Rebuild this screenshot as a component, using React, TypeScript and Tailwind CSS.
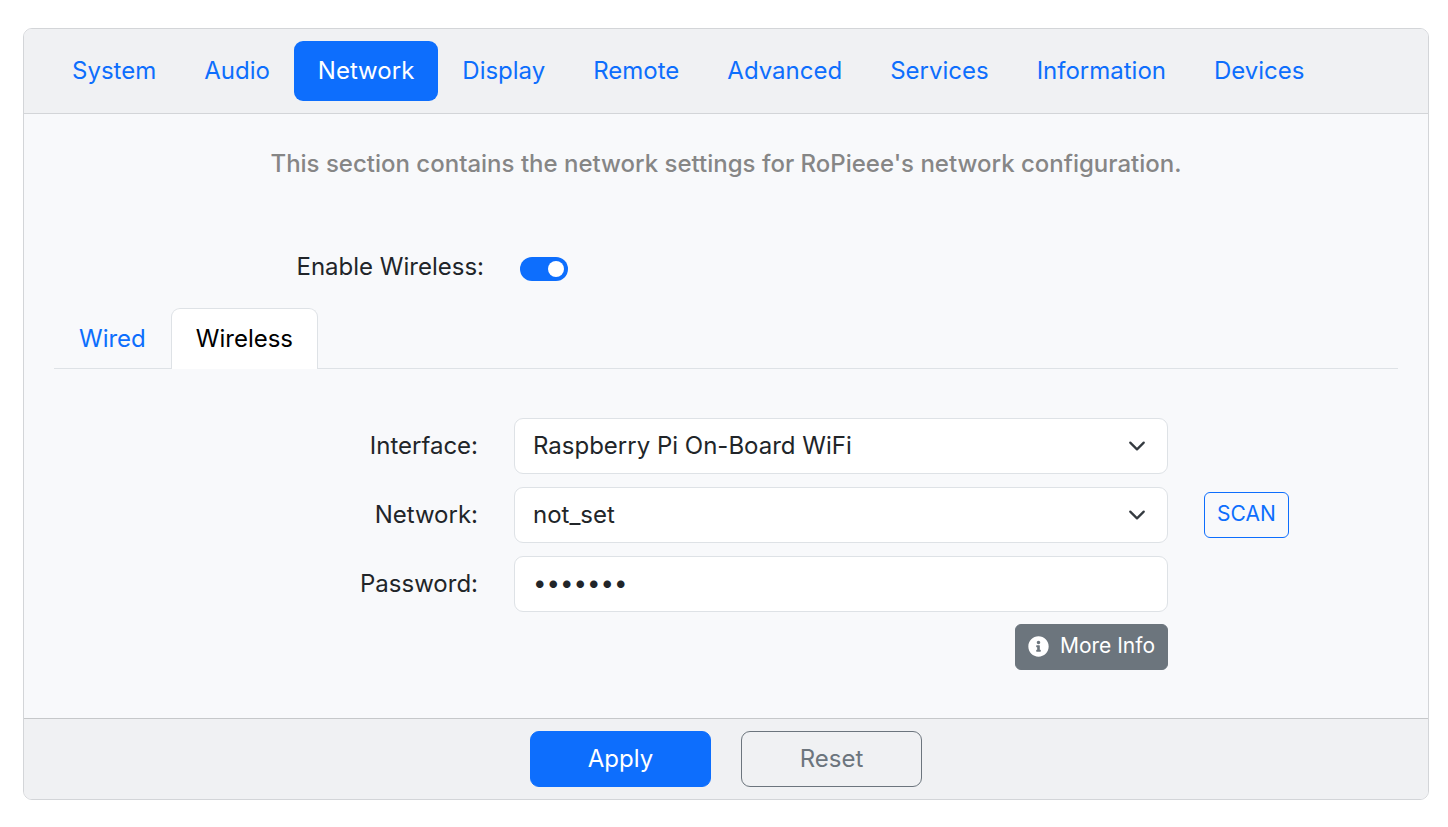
import { useState } from "react";
import type { ReactNode } from "react";
import { FaInfoCircle } from "react-icons/fa";

const sections = [
  "System",
  "Audio",
  "Network",
  "Display",
  "Remote",
  "Advanced",
  "Services",
  "Information",
  "Devices",
];

function SelectField({ id, options }: { id: string; options: string[] }) {
  return (
    <div className="relative col-span-6">
      <select
        id={id}
        className="h-14 w-full appearance-none rounded-[9px] border border-[#dee2e6] bg-white pr-14 pl-[18px] text-[#212529]"
      >
        {options.map((option) => (
          <option key={option}>{option}</option>
        ))}
      </select>
      <svg
        viewBox="0 0 16 16"
        aria-hidden="true"
        className="pointer-events-none absolute inset-y-0 right-[22px] my-auto size-[18px]"
      >
        <path
          d="m2 5 6 6 6-6"
          fill="none"
          stroke="#343a40"
          strokeWidth="2"
          strokeLinecap="round"
          strokeLinejoin="round"
        />
      </svg>
    </div>
  );
}

function Row({ id, label, children }: { id: string; label: string; children: ReactNode }) {
  return (
    <div className="grid grid-cols-12 items-center gap-x-9">
      <label htmlFor={id} className="col-span-4 text-right">
        {label}
      </label>
      {children}
    </div>
  );
}

export default function App() {
  const [wireless, setWireless] = useState(true);
  const [password, setPassword] = useState("secret1");

  return (
    <main className="py-7 pr-[19px] pl-[23px] font-['Inter',sans-serif] text-[24px] leading-9 text-[#212529]">
      <div className="overflow-hidden rounded-[9px] border border-[#d3d5d8] bg-[#f8f9fb]">
        <nav className="flex border-b border-[#d3d5d8] bg-[#f0f1f3] px-6 py-3">
          {sections.map((section) => (
            <a
              key={section}
              href={`#${section.toLowerCase()}`}
              className={
                section === "Network"
                  ? "rounded-[9px] bg-[#0d6efd] px-6 py-3 text-white"
                  : "rounded-[9px] px-6 py-3 text-[#0d6efd]"
              }
            >
              {section}
            </a>
          ))}
        </nav>

        <div className="px-[30px] pt-8 pb-12">
          <p className="text-center font-medium text-[#868686]">
            This section contains the network settings for RoPieee's network configuration.
          </p>

          <div className="mt-[67px] grid grid-cols-12 items-center gap-x-9 pl-[9px]">
            <label htmlFor="enable-wireless" className="col-span-4 text-right">
              Enable Wireless:
            </label>
            <input
              id="enable-wireless"
              type="checkbox"
              role="switch"
              checked={wireless}
              onChange={(event) => setWireless(event.target.checked)}
              className="mt-1 flex h-6 w-12 appearance-none items-center rounded-full bg-[#adb5bd] px-1 before:size-4 before:rounded-full before:bg-white checked:justify-end checked:bg-[#0d6efd]"
            />
          </div>

          <div className="mt-[23px] flex border-b border-[#dee2e6]">
            <a href="#wired" className="border border-transparent px-6 pt-3 pb-2.5 text-[#0d6efd]">
              Wired
            </a>
            <a
              href="#wireless"
              className="-mb-px rounded-t-[9px] border border-b-0 border-[#dee2e6] bg-white px-6 pt-3 pb-2.5 text-black"
            >
              Wireless
            </a>
          </div>

          <form className="mt-[49px]">
            <div className="flex flex-col gap-[13px]">
              <Row id="interface" label="Interface:">
                <SelectField id="interface" options={["Raspberry Pi On-Board WiFi"]} />
              </Row>
              <Row id="network" label="Network:">
                <SelectField id="network" options={["not_set"]} />
                <button
                  type="button"
                  className="col-span-2 justify-self-start rounded-md border border-[#0d6efd] px-3 pt-[5px] pb-[7px] text-[21px] leading-8 text-[#0d6efd]"
                >
                  SCAN
                </button>
              </Row>
              <Row id="password" label="Password:">
                <input
                  id="password"
                  type="password"
                  value={password}
                  onChange={(event) => setPassword(event.target.value)}
                  className="col-span-6 h-14 w-full rounded-[9px] border border-[#dee2e6] bg-white px-[18px] pb-[3px]"
                />
              </Row>
            </div>
            <div className="mt-3 grid grid-cols-12 gap-x-9">
              <button
                type="button"
                className="col-span-6 col-start-5 flex items-center gap-[11px] justify-self-end rounded-md border border-[#6c757d] bg-[#6c757d] px-3 pt-[5px] pb-[7px] text-[21px] leading-8 text-white"
              >
                <FaInfoCircle aria-hidden="true" />
                More Info
              </button>
            </div>
          </form>
        </div>

        <div className="flex justify-center gap-[30px] border-t border-[#c6c8ca] bg-[#f0f1f3] py-3">
          <button
            type="submit"
            className="h-14 w-[181px] rounded-[9px] border border-[#0d6efd] bg-[#0d6efd] text-white"
          >
            Apply
          </button>
          <button
            type="reset"
            className="h-14 w-[181px] rounded-[9px] border border-[#6c757d] text-[#6c757d]"
          >
            Reset
          </button>
        </div>
      </div>
    </main>
  );
}
